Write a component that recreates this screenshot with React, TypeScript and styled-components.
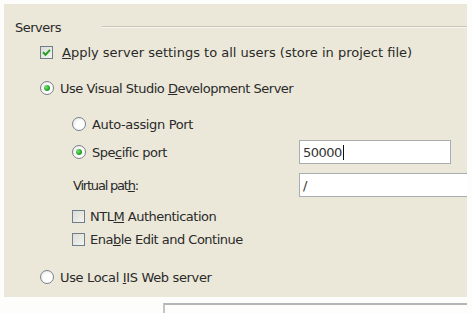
import React from 'react';
import styled, { createGlobalStyle } from 'styled-components';

const GlobalStyle = createGlobalStyle`
  html, body {
    margin: 0;
    padding: 0;
    background: #fdfdfb;
  }
  body {
    font-family: 'DejaVu Sans', Verdana, sans-serif;
    font-size: 13px;
    color: #2a2a2a;
  }
`;

const Frame = styled.div`
  width: 472px;
  height: 313px;
  padding: 4px 5px 0 4px;
  box-sizing: border-box;
  overflow: hidden;
`;

const Panel = styled.div`
  display: flex;
  flex-direction: column;
  height: 293px;
  padding: 13px 0 0 11px;
  box-sizing: border-box;
  background: #ebe8d9;
  overflow: hidden;
`;

const GroupHeader = styled.div`
  display: flex;
  align-items: center;
  height: 20px;
  gap: 41px;
  letter-spacing: -0.5px;

  &::after {
    content: '';
    flex: 1;
    height: 1px;
    background: #c9c8b8;
    border-bottom: 1px solid #f6f5ee;
  }
`;

const Row = styled.div<{ $top: number; $indent: number; $h?: number }>`
  display: flex;
  align-items: center;
  height: ${(p) => p.$h ?? 20}px;
  margin-top: ${(p) => p.$top}px;
  padding-left: ${(p) => p.$indent}px;
`;

const Option = styled.label<{ $gap: number; $width?: number; $spacing?: number }>`
  display: flex;
  align-items: center;
  gap: ${(p) => p.$gap}px;
  width: ${(p) => (p.$width ? `${p.$width}px` : 'auto')};
  flex-shrink: 0;
  white-space: nowrap;
  letter-spacing: ${(p) => p.$spacing ?? -0.5}px;
`;

const Key = styled.u`
  text-decoration: underline;
  text-underline-offset: 1px;
`;

const RadioDot = styled.span<{ $on?: boolean }>`
  position: relative;
  width: 14px;
  height: 14px;
  box-sizing: border-box;
  border-radius: 50%;
  border: 1.5px solid #7a828c;
  background: radial-gradient(circle at 60% 60%, #ffffff 40%, #dcdcd8 100%);
  flex-shrink: 0;

  &::after {
    content: '';
    display: ${(p) => (p.$on ? 'block' : 'none')};
    position: absolute;
    left: 2.5px;
    top: 2.5px;
    width: 6px;
    height: 6px;
    border-radius: 50%;
    background: radial-gradient(circle at 35% 35%, #7be07b 0%, #26a526 60%, #1a7d1a 100%);
  }
`;

const CheckBox = styled.span`
  display: flex;
  align-items: center;
  justify-content: center;
  width: 13px;
  height: 13px;
  box-sizing: border-box;
  border: 1px solid #6f7e8c;
  background: linear-gradient(135deg, #dcdcd6 0%, #f4f4f0 100%);
  flex-shrink: 0;
`;

const TextBox = styled.div<{ $width: number }>`
  display: flex;
  align-items: center;
  width: ${(p) => p.$width}px;
  height: 24px;
  padding-left: 3px;
  box-sizing: border-box;
  border: 1px solid #a8adb2;
  background: #fff;
  color: #333;
  letter-spacing: -0.5px;
  flex-shrink: 0;
`;

const Caret = styled.span`
  width: 1px;
  height: 15px;
  margin-left: 1px;
  background: #111;
`;

const Footer = styled.div`
  display: flex;
  padding: 6px 0 0 159px;
`;

const CutBox = styled.div`
  flex: 1;
  height: 14px;
  border-top: 2px solid #b4b6b6;
  border-left: 2px solid #c4c6c6;
`;

type OptProps = { on?: boolean; gap?: number; width?: number; spacing?: number; children: React.ReactNode };

const Radio = ({ on, gap = 6, width, spacing, children }: OptProps) => (
  <Option $gap={gap} $width={width} $spacing={spacing}>
    <RadioDot $on={on} />
    <span>{children}</span>
  </Option>
);

const Check = ({ on, gap = 5, spacing, children }: OptProps) => (
  <Option $gap={gap} $spacing={spacing}>
    <CheckBox>
      {on && (
        <svg width="9" height="9" viewBox="0 0 9 9">
          <path d="M1 4.2 L3.5 6.8 L8 1.8" fill="none" stroke="#22a022" strokeWidth="2" />
        </svg>
      )}
    </CheckBox>
    <span>{children}</span>
  </Option>
);

const App = () => (
  <>
    <GlobalStyle />
    <Frame>
      <Panel>
        <GroupHeader>Servers</GroupHeader>
        <Row $top={5} $indent={25}>
          <Check on gap={9} spacing={0}>
            <Key>A</Key>pply server settings to all users (store in project file)
          </Check>
        </Row>
        <Row $top={16} $indent={25}>
          <Radio on>
            Use Visual Studio <Key>D</Key>evelopment Server
          </Radio>
        </Row>
        <Row $top={16} $indent={57}>
          <Radio spacing={-0.35}>
            Auto-assi<Key>g</Key>n Port
          </Radio>
        </Row>
        <Row $top={6} $indent={57} $h={24}>
          <Radio on width={227}>
            Spe<Key>c</Key>ific port
          </Radio>
          <TextBox $width={152}>
            50000
            <Caret />
          </TextBox>
        </Row>
        <Row $top={9} $indent={58} $h={24}>
          <Option $gap={0} $width={226} $spacing={-1.2}>
            Virtual pat<Key>h</Key>:
          </Option>
          <TextBox $width={190}>/</TextBox>
        </Row>
        <Row $top={9} $indent={57}>
          <Check>
            NTL<Key>M</Key> Authentication
          </Check>
        </Row>
        <Row $top={3} $indent={57}>
          <Check>
            Ena<Key>b</Key>le Edit and Continue
          </Check>
        </Row>
        <Row $top={18} $indent={25}>
          <Radio spacing={-0.35}>
            Use Local <Key>I</Key>IS Web server
          </Radio>
        </Row>
      </Panel>
      <Footer>
        <CutBox />
      </Footer>
    </Frame>
  </>
);

export default App;
